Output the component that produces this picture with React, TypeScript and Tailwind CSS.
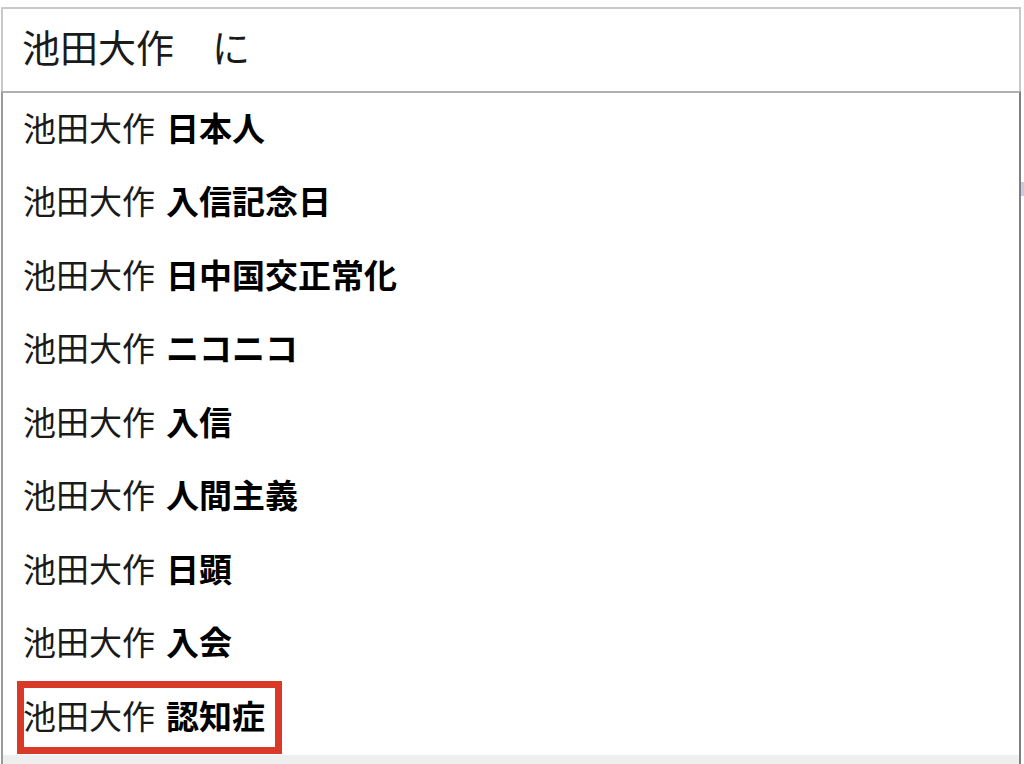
import React from "react";

const items = [
  "日本人",
  "入信記念日",
  "日中国交正常化",
  "ニコニコ",
  "入信",
  "人間主義",
  "日顕",
  "入会",
  "認知症",
];

export default function App() {
  return (
    <div
      className="relative w-[1024px] h-[764px] overflow-hidden bg-white text-[#1a1a1a]"
      style={{ fontFamily: '"Noto Sans CJK JP", "Noto Sans", sans-serif' }}
    >
      <div className="h-[7px]" />
      <div className="ml-[1px] w-[1020px] h-[84px] border-2 border-b-0 border-[#c8c8c8] flex items-center pl-[19px] pb-[9px] text-[38px] leading-none">
        池田大作　に
      </div>
      <div className="ml-[1px] w-[1020px] h-[664px] border-x-2 border-l-[#9a9a9a] border-r-[#7f7f7f] border-t-2 border-t-[#b0b0b0] flex flex-col">
        {items.map((s) => (
          <div
            key={s}
            className="h-[73.5px] shrink-0 flex items-center pl-[20px] pb-[5px] text-[33px] leading-none"
          >
            <span>池田大作 </span>
            <span className="ml-[11px] font-bold text-black">{s}</span>
          </div>
        ))}
      </div>
      <div className="ml-[1px] w-[1020px] h-[9px] bg-[#efefef] border-x-2 border-l-[#9a9a9a] border-r-[#7f7f7f]" />
      <div className="absolute left-[17px] top-[681px] w-[265px] h-[73px] border-[7px] border-[#d83a27]" />
      <div className="absolute left-[1021px] top-[182px] w-[3px] h-[14px] bg-[#c9cbe0]" />
    </div>
  );
}
